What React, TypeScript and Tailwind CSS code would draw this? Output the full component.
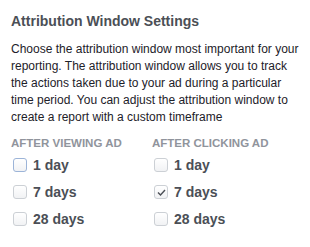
const viewing = [
  { label: '1 day', checked: false, focused: true },
  { label: '7 days', checked: false },
  { label: '28 days', checked: false },
];

const clicking = [
  { label: '1 day', checked: false },
  { label: '7 days', checked: true },
  { label: '28 days', checked: false },
];

type Opt = { label: string; checked: boolean; focused?: boolean };

function Box({ checked, focused }: { checked: boolean; focused?: boolean }) {
  return (
    <span
      className={`flex h-[14px] w-[14px] items-center justify-center rounded-[3px] border bg-gradient-to-b from-white to-[#f1f2f4] ${
        focused ? 'border-[#9cb4d8]' : 'border-[#ccd0d5]'
      }`}
    >
      {checked && (
        <svg width="9" height="7" viewBox="0 0 9 7" fill="none">
          <path d="M1 3.5 L3.5 6 L8 1" stroke="#4b4f56" strokeWidth="1.4" />
        </svg>
      )}
    </span>
  );
}

function Column({ title, options }: { title: string; options: Opt[] }) {
  return (
    <div className="flex flex-col">
      <div className="text-[11.5px] font-bold leading-[14px] text-[#90949c]">{title}</div>
      <div className="mt-[7px] flex flex-col gap-[11px] pl-[2px]">
        {options.map((o) => (
          <label key={o.label} className="flex h-[16px] items-center gap-[6px]">
            <Box checked={o.checked} focused={o.focused} />
            <span className="text-[14px] font-bold leading-[16px] text-[#4b4f56]">{o.label}</span>
          </label>
        ))}
      </div>
    </div>
  );
}

export default function App() {
  return (
    <div className="h-[247px] w-[310px] bg-white px-[11px] pt-[12px] font-['Liberation_Sans',Arial,sans-serif]">
      <h2 className="text-[14px] font-bold leading-[18px] text-[#4b4f56]">Attribution Window Settings</h2>
      <p className="mt-[11px] text-[12px] leading-[17px] text-[#1d2129]">
        Choose the attribution window most important for your reporting. The attribution window allows you to track
        the actions taken due to your ad during a particular time period. You can adjust the attribution window to
        create a report with a custom timeframe
      </p>
      <div className="mt-[10px] grid grid-cols-[141px_1fr]">
        <Column title="AFTER VIEWING AD" options={viewing} />
        <Column title="AFTER CLICKING AD" options={clicking} />
      </div>
    </div>
  );
}
